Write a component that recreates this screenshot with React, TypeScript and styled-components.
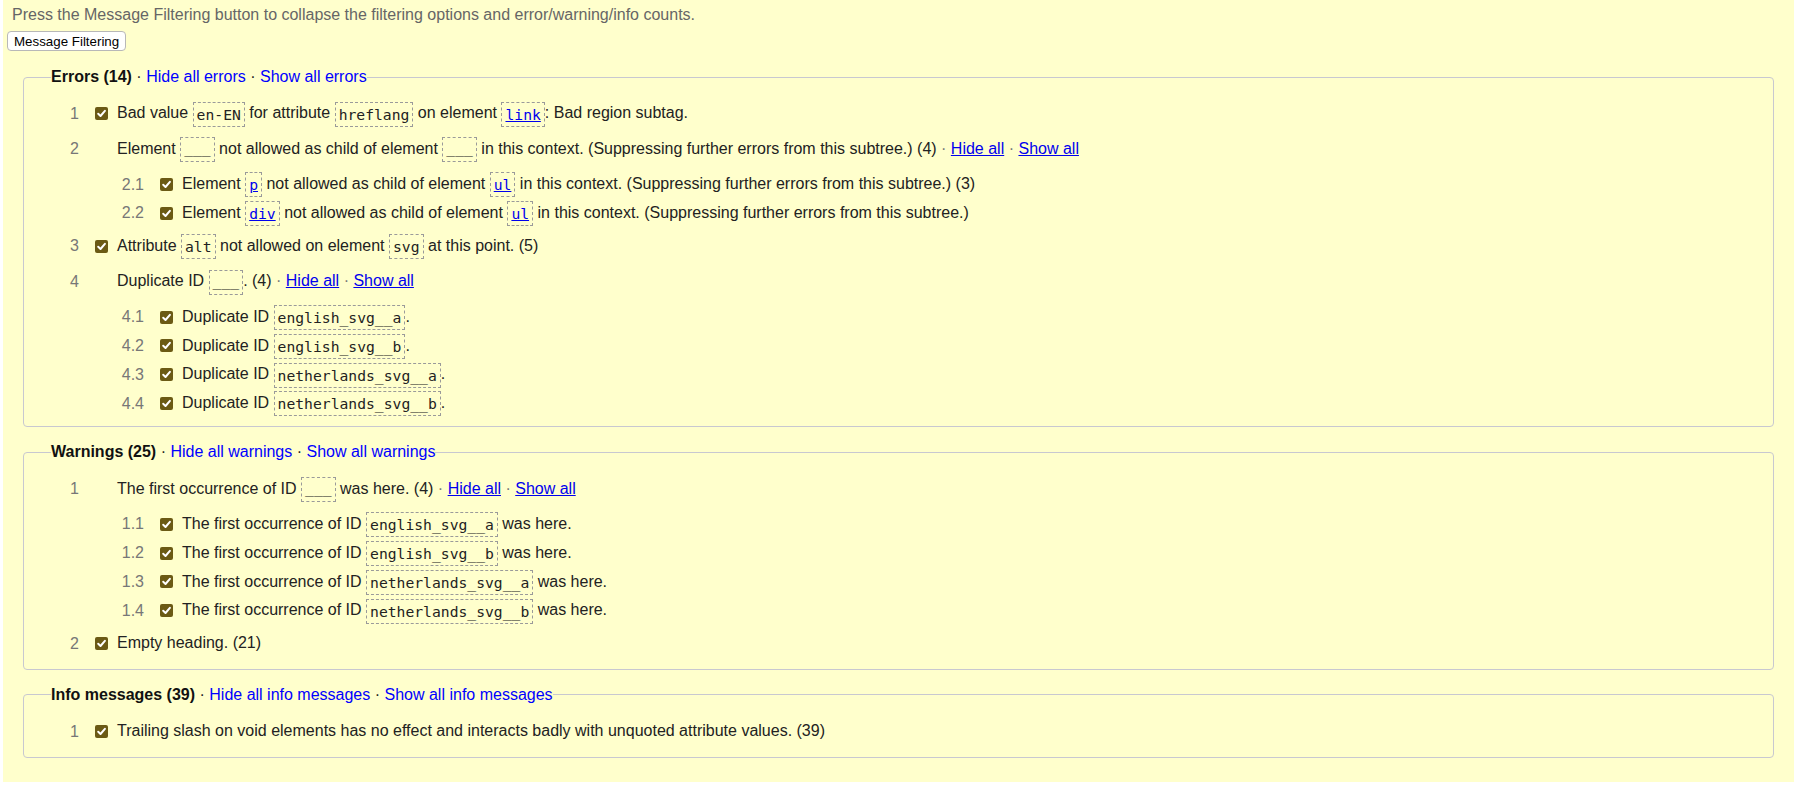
import React from "react";
import styled, { createGlobalStyle } from "styled-components";

const Global = createGlobalStyle`
  html, body { margin: 0; padding: 0; background: #ffffff; }
  body {
    font-family: "Liberation Sans", Arial, sans-serif;
    font-size: 16px;
    color: #222222;
  }
`;

const Page = styled.div`
  margin-left: 3px;
  height: 782px;
  box-sizing: border-box;
  padding-top: 6px;
  background: #ffffcc;
  overflow: hidden;
`;

const Intro = styled.p`
  margin: 0 0 0 9px;
  line-height: 18px;
  color: #666666;
`;

const FilterButton = styled.button`
  display: block;
  margin: 7px 0 0 4px;
  height: 20px;
  padding: 0 6px;
  font-family: "Liberation Sans", Arial, sans-serif;
  font-size: 13.33px;
  color: #000000;
  background: #ffffff;
  border: 1px solid #b8b8b8;
  border-radius: 4px;
`;

const Groups = styled.div`
  display: flex;
  flex-direction: column;
  gap: 16px;
  margin: 17px 20px 0 20px;
`;

const Group = styled.fieldset`
  margin: 0;
  padding: 10px 0 7.5px 0;
  min-width: 0;
  border: 1px solid #c8c8d0;
  border-radius: 4px;
`;

const Legend = styled.legend`
  margin-left: 27px;
  padding: 0;
  line-height: 18px;
  color: #222222;
`;

const LegendTitle = styled.strong`
  font-weight: bold;
  color: #111111;
`;

const LegendLink = styled.a`
  color: #0000ff;
  text-decoration: none;
  cursor: pointer;
`;

const List = styled.ol`
  list-style: none;
  margin: 0;
  padding: 0;
`;

const Item = styled.li`
  padding: 3.3px 0;
`;

const SubList = styled.ol`
  list-style: none;
  margin: 6.7px 0 -2.5px 0;
  padding: 0;
`;

const Row = styled.div<{ $sub?: boolean }>`
  display: flex;
  align-items: center;
  height: 28.8px;
  padding-left: ${(p) => (p.$sub ? 80 : 15)}px;
`;

const Num = styled.span`
  flex: none;
  width: 40px;
  text-align: right;
  color: #777777;
`;

const CheckBox = styled.span<{ $on: boolean }>`
  flex: none;
  display: flex;
  align-items: center;
  justify-content: center;
  width: 13px;
  height: 13px;
  margin: 0 9px 0 16px;
  border-radius: 2px;
  background: ${(p) => (p.$on ? "#6b5a14" : "transparent")};
`;

const Text = styled.span`
  white-space: nowrap;
  line-height: 28.8px;
  color: #222222;
`;

const Code = styled.code`
  display: inline-block;
  font-family: "DejaVu Sans Mono", monospace;
  font-size: 14.7px;
  line-height: 19px;
  padding: 2px 3px;
  border: 1px dashed #9a9a9a;
  vertical-align: middle;
  color: #222222;
`;

const Underscores = styled.span`
  position: relative;
  top: -2px;
`;

const CodeLink = styled.a`
  color: #0000ee;
  text-decoration: underline;
  cursor: pointer;
`;

const ItemLink = styled.a`
  color: #0000ee;
  text-decoration: underline;
  cursor: pointer;
`;

const Sep = styled.span`
  color: #777777;
`;

type Msg = {
  n: string;
  check: boolean;
  body: React.ReactNode;
  subs?: Msg[];
};

const Check = ({ on }: { on: boolean }) => (
  <CheckBox $on={on}>
    {on && (
      <svg width="11" height="11" viewBox="0 0 11 11">
        <path
          d="M2.2 5.8 L4.5 8 L8.9 2.8"
          fill="none"
          stroke="#ffffff"
          strokeWidth="2"
          strokeLinecap="round"
          strokeLinejoin="round"
        />
      </svg>
    )}
  </CheckBox>
);

const Toggles = () => (
  <>
    {" "}
    <Sep>·</Sep> <ItemLink>Hide all</ItemLink> <Sep>·</Sep> <ItemLink>Show all</ItemLink>
  </>
);

const Blank = () => (
  <Code>
    <Underscores>___</Underscores>
  </Code>
);

const dupes = ["english_svg__a", "english_svg__b", "netherlands_svg__a", "netherlands_svg__b"];

const errors: Msg[] = [
  {
    n: "1",
    check: true,
    body: (
      <>
        Bad value <Code>en-EN</Code> for attribute <Code>hreflang</Code> on element{" "}
        <Code>
          <CodeLink>link</CodeLink>
        </Code>
        : Bad region subtag.
      </>
    ),
  },
  {
    n: "2",
    check: false,
    body: (
      <>
        Element <Blank /> not allowed as child of element <Blank /> in this context. (Suppressing
        further errors from this subtree.) (4)
        <Toggles />
      </>
    ),
    subs: [
      {
        n: "2.1",
        check: true,
        body: (
          <>
            Element{" "}
            <Code>
              <CodeLink>p</CodeLink>
            </Code>{" "}
            not allowed as child of element{" "}
            <Code>
              <CodeLink>ul</CodeLink>
            </Code>{" "}
            in this context. (Suppressing further errors from this subtree.) (3)
          </>
        ),
      },
      {
        n: "2.2",
        check: true,
        body: (
          <>
            Element{" "}
            <Code>
              <CodeLink>div</CodeLink>
            </Code>{" "}
            not allowed as child of element{" "}
            <Code>
              <CodeLink>ul</CodeLink>
            </Code>{" "}
            in this context. (Suppressing further errors from this subtree.)
          </>
        ),
      },
    ],
  },
  {
    n: "3",
    check: true,
    body: (
      <>
        Attribute <Code>alt</Code> not allowed on element <Code>svg</Code> at this point. (5)
      </>
    ),
  },
  {
    n: "4",
    check: false,
    body: (
      <>
        Duplicate ID <Blank />. (4)
        <Toggles />
      </>
    ),
    subs: dupes.map((d, i) => ({
      n: `4.${i + 1}`,
      check: true,
      body: (
        <>
          Duplicate ID <Code>{d}</Code>.
        </>
      ),
    })),
  },
];

const warnings: Msg[] = [
  {
    n: "1",
    check: false,
    body: (
      <>
        The first occurrence of ID <Blank /> was here. (4)
        <Toggles />
      </>
    ),
    subs: dupes.map((d, i) => ({
      n: `1.${i + 1}`,
      check: true,
      body: (
        <>
          The first occurrence of ID <Code>{d}</Code> was here.
        </>
      ),
    })),
  },
  { n: "2", check: true, body: <>Empty heading. (21)</> },
];

const infos: Msg[] = [
  {
    n: "1",
    check: true,
    body: <>Trailing slash on void elements has no effect and interacts badly with unquoted attribute values. (39)</>,
  },
];

const MessageRow = ({ m, sub }: { m: Msg; sub?: boolean }) => (
  <Row $sub={sub}>
    <Num>{m.n}</Num>
    <Check on={m.check} />
    <Text>{m.body}</Text>
  </Row>
);

const Section = ({
  title,
  kind,
  items,
}: {
  title: string;
  kind: string;
  items: Msg[];
}) => (
  <Group>
    <Legend>
      <LegendTitle>{title}</LegendTitle> · <LegendLink>Hide all {kind}</LegendLink> ·{" "}
      <LegendLink>Show all {kind}</LegendLink>
    </Legend>
    <List>
      {items.map((m) => (
        <Item key={m.n}>
          <MessageRow m={m} />
          {m.subs && (
            <SubList>
              {m.subs.map((s) => (
                <li key={s.n}>
                  <MessageRow m={s} sub />
                </li>
              ))}
            </SubList>
          )}
        </Item>
      ))}
    </List>
  </Group>
);

export default function App() {
  return (
    <>
      <Global />
      <Page>
        <Intro>
          Press the Message Filtering button to collapse the filtering options and
          error/warning/info counts.
        </Intro>
        <FilterButton type="button">Message Filtering</FilterButton>
        <Groups>
          <Section title="Errors (14)" kind="errors" items={errors} />
          <Section title="Warnings (25)" kind="warnings" items={warnings} />
          <Section title="Info messages (39)" kind="info messages" items={infos} />
        </Groups>
      </Page>
    </>
  );
}
